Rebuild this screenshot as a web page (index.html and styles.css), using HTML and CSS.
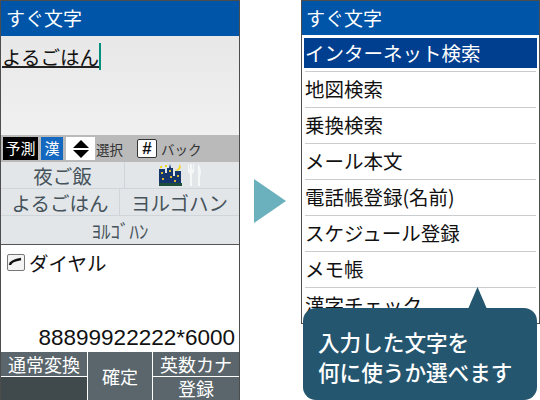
FILE: index.html
```html
<!DOCTYPE html>
<html lang="ja">
<head>
  <meta charset="UTF-8" />
  <title>すぐ文字</title>
  <link rel="stylesheet" href="styles.css">
</head>
<body>
  <div class="page">

    <!-- input screen -->
    <section class="phone phone-left">
      <header class="title">すぐ文字</header>
      <div class="input-area">
        <span class="typed">よるごはん</span><span class="caret"></span>
      </div>
      <div class="guide">
        <span class="tag tag-black">予測</span>
        <span class="tag tag-blue">漢</span>
        <span class="updown">
          <svg width="18" height="20" viewBox="0 0 18 20"><path d="M9 1 L17 9 H1 Z M1 11 H17 L9 19 Z" fill="#000"/></svg>
        </span>
        <span class="guide-text">選択</span>
        <span class="hash">#</span>
        <span class="guide-text">バック</span>
      </div>
      <div class="candidates">
        <div class="cand-row row-a">
          <div class="cand cand-wide">夜ご飯</div>
          <div class="cand cand-icons">
            <svg width="23" height="22" viewBox="0 0 23 22">
              <path d="M0 5 H6 V9 H8 V4 H10 L11 0 L12 4 H14 V12 H16 V7 H22 V20 H0 Z" fill="#14366c"/>
              <rect x="0" y="19" width="23" height="3" fill="#1d4f3a"/>
              <path d="M2 8h2v2H2zM10 6h2v2h-2zM3 14h2v2H3zM11 12h2v2h-2zM18 11h2v2h-2zM15 16h2v2h-2z" fill="#d8b830"/>
              <path d="M20 0 A3.5 3.5 0 1 1 16 6 A4.5 4.5 0 0 0 20 0 Z M1 2h2v2H1zM6 1h2v2H6z" fill="#f2d820"/>
            </svg>
            <svg width="14" height="22" viewBox="0 0 14 22">
              <path d="M0 0 V7 Q0 9 2 10 V22 H4 V10 Q6 9 6 7 V0 H5 V5 H4 V0 H2 V5 H1 V0 Z" fill="#f6f7f7"/>
              <path d="M10 0 Q13 3 13 10 L12 12 V22 H10 Z" fill="#f6f7f7"/>
            </svg>
          </div>
        </div>
        <div class="cand-row row-b">
          <div class="cand">よるごはん</div>
          <div class="cand">ヨルゴハン</div>
        </div>
        <div class="cand-row row-c">
          <div class="cand cand-half">ﾖﾙｺﾞﾊﾝ</div>
        </div>
      </div>
      <div class="dial-area">
        <div class="dial-label">
          <span class="dial-icon">
            <svg width="16" height="14" viewBox="0 0 16 14"><path d="M2 9 Q2 5 13 3" stroke="#111" stroke-width="2.4" fill="none"/></svg>
          </span>
          ダイヤル
        </div>
        <div class="dial-number">88899922222*6000</div>
      </div>
      <div class="softkeys">
        <div class="soft-col col-side">
          <div class="soft-key">通常変換</div>
          <div class="soft-key soft-empty"></div>
        </div>
        <div class="soft-key col-center">確定</div>
        <div class="soft-col col-side">
          <div class="soft-key">英数カナ</div>
          <div class="soft-key">登録</div>
        </div>
      </div>
    </section>

    <div class="arrow"></div>

    <!-- menu screen -->
    <div class="right-wrap">
      <section class="phone phone-right">
        <header class="title title-right">すぐ文字</header>
        <ul class="menu">
          <li class="menu-item selected">インターネット検索</li>
          <li class="menu-item">地図検索</li>
          <li class="menu-item">乗換検索</li>
          <li class="menu-item">メール本文</li>
          <li class="menu-item">電話帳登録(名前)</li>
          <li class="menu-item">スケジュール登録</li>
          <li class="menu-item">メモ帳</li>
          <li class="menu-item">漢字チェック</li>
        </ul>
      </section>
      <div class="bubble">入力した文字を<br>何に使うか選べます</div>
    </div>

  </div>
</body>
</html>
```
FILE: styles.css
```css
* { box-sizing: border-box; }
html, body {
  margin: 0;
  padding: 0;
  background: #fff;
}
body {
  font-family: "Noto Sans CJK JP", "Noto Sans", sans-serif;
  overflow: hidden;
}
.page {
  display: flex;
  width: 540px;
  height: 400px;
}
.phone {
  display: flex;
  flex-direction: column;
  border: 1px solid #4d4d4d;
  border-bottom: none;
  background: #fff;
  overflow: hidden;
}
.phone-left {
  width: 240px;
  height: 400px;
}
.title {
  height: 35px;
  padding-left: 5px;
  background: #0055a8;
  color: #fff;
  font-size: 19px;
  line-height: 33px;
  flex-shrink: 0;
}
.input-area {
  height: 99px;
  padding: 7px 1px 0;
  background: linear-gradient(#e8e8e8, #f0f0f0);
  display: flex;
  align-items: flex-start;
}
.typed {
  font-size: 19.5px;
  line-height: 27px;
  height: 25px;
  color: #111;
  border-bottom: 2px solid #222;
}
.caret {
  width: 2px;
  height: 27px;
  margin-top: 0;
  background: #00907c;
}
.guide {
  display: flex;
  align-items: center;
  height: 27px;
  padding-left: 2px;
  background: #bababa;
  flex-shrink: 0;
}
.tag {
  height: 23px;
  font-size: 15px;
  line-height: 22px;
  text-align: center;
  color: #fff;
}
.tag-black {
  width: 35px;
  background: #000;
}
.tag-blue {
  width: 22px;
  margin-left: 3px;
  background: #1468c0;
}
.updown {
  width: 29px;
  height: 23px;
  margin-left: 3px;
  margin-right: 1px;
  background: #fff;
  display: flex;
  align-items: center;
  justify-content: center;
}
.guide-text {
  font-size: 13.5px;
  color: #333;
}
.hash {
  width: 20px;
  height: 19px;
  margin-left: 14px;
  margin-right: 4px;
  background: #fff;
  border: 1px solid #333;
  border-radius: 2px;
  font-family: "Liberation Sans", sans-serif;
  font-weight: bold;
  font-size: 17px;
  line-height: 17px;
  text-align: center;
  color: #111;
}
.candidates {
  background: #e2e6e9;
  color: #47535b;
  flex-shrink: 0;
}
.cand-row {
  display: flex;
  border-bottom: 1px solid #cfd5d9;
}
.row-a { height: 27px; }
.row-b { height: 27px; }
.row-c { height: 28px; border-bottom: none; }
.cand {
  flex: 1;
  display: flex;
  align-items: center;
  justify-content: center;
  font-size: 19.5px;
  border-left: 1px solid #cfd5d9;
}
.cand:first-child {
  border-left: none;
}
.row-a .cand-wide {
  flex: none;
  width: 123px;
}
.row-b .cand:first-child {
  flex: none;
  width: 118px;
}
.cand-half {
  font-size: 19px;
}
.cand-icons {
  gap: 6px;
  padding-right: 3px;
}
.dial-area {
  flex: 1;
  display: flex;
  flex-direction: column;
  justify-content: space-between;
  border-top: 1px solid #555;
  background: #fff;
  color: #111;
}
.dial-label {
  display: flex;
  align-items: center;
  height: 27px;
  margin-top: 4px;
  padding-left: 6px;
  font-size: 19.5px;
}
.dial-icon {
  display: flex;
  align-items: center;
  justify-content: center;
  width: 18px;
  height: 17px;
  margin-right: 4px;
  background: #f4f4f4;
  border: 1px solid #777;
  border-radius: 2px;
}
.dial-number {
  padding-right: 4px;
  text-align: right;
  font-family: "Liberation Sans", sans-serif;
  font-size: 22.5px;
  line-height: 28px;
  white-space: nowrap;
}
.softkeys {
  display: flex;
  height: 48px;
  flex-shrink: 0;
  background: #fff;
  gap: 1px;
}
.col-side {
  flex: 1;
  min-width: 0;
}
.soft-col {
  display: flex;
  flex-direction: column;
  gap: 1px;
}
.soft-key {
  flex: 1;
  min-height: 0;
  display: flex;
  align-items: center;
  justify-content: center;
  background: #5a666c;
  color: #fff;
  font-size: 18px;
  line-height: 1;
}
.soft-empty {
  background: #40494c;
}
.col-center {
  flex: none;
  width: 64px;
}
.arrow {
  width: 32px;
  height: 44px;
  margin: 179px 15px 0 14px;
  background: #6ab0bd;
  clip-path: polygon(0 0, 100% 50%, 0 100%);
}
.right-wrap {
  position: relative;
  width: 239px;
}
.phone-right {
  height: 324px;
  border-bottom: 1px solid #4d4d4d;
}
.title-right {
  height: 34px;
  padding-left: 4px;
  line-height: 33px;
}
.menu {
  margin: 0;
  padding: 3px 2px 0;
  list-style: none;
}
.menu-item {
  height: 36px;
  margin: 0 1px;
  padding-left: 0;
  border-bottom: 1px solid #c9cdd0;
  font-size: 19.5px;
  line-height: 34px;
  color: #111;
  white-space: nowrap;
}
.menu-item.selected {
  margin: 0;
  height: 30px;
  padding-left: 1px;
  background: #003f90;
  color: #fff;
  border: none;
  line-height: 29px;
}
.menu-item.selected + .menu-item {
  border-top: 1px solid #c9cdd0;
  margin-top: 3px;
  height: 37px;
}
/* bubble sits over the menu */
.bubble {
  position: absolute;
  left: 2px;
  top: 308px;
  width: 234px;
  height: 92px;
  padding: 19px 15px 0;
  background: #24566f;
  border-radius: 13px;
  color: #fff;
  font-size: 21.6px;
  font-weight: 500;
  line-height: 30px;
  white-space: nowrap;
}
.bubble::before {
  content: "";
  position: absolute;
  left: 165px;
  top: -21px;
  width: 19px;
  height: 22px;
  background: #24566f;
  clip-path: polygon(50% 0, 100% 100%, 0 100%);
}
```
